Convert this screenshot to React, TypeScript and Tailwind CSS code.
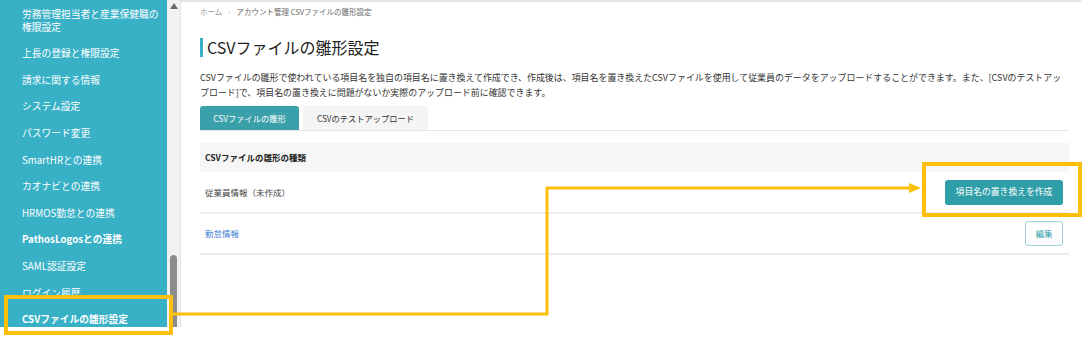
import React from "react";

const menu = [
  { label: "上長の登録と権限設定" },
  { label: "請求に関する情報" },
  { label: "システム設定" },
  { label: "パスワード変更" },
  { label: "SmartHRとの連携" },
  { label: "カオナビとの連携" },
  { label: "HRMOS勤怠との連携" },
  { label: "PathosLogosとの連携", bold: true },
  { label: "SAML認証設定" },
  { label: "ログイン履歴" },
  { label: "CSVファイルの雛形設定", bold: true },
];

export default function App() {
  return (
    <div className="relative w-[1089px] h-[342px] bg-white overflow-hidden font-['Noto_Sans_CJK_JP','Noto_Sans',sans-serif] text-[#333]">
      <div className="flex h-[327px]">
        {/* Sidebar */}
        <aside className="w-[167px] shrink-0 bg-[#38b0c6] text-white text-[9.75px] leading-[13px] pl-[22px] pt-[2px] overflow-hidden">
          <div className="h-[38.5px] flex flex-col justify-center">
            <span>労務管理担当者と産業保健職の</span>
            <span>権限設定</span>
          </div>
          {menu.map((m) => (
            <div
              key={m.label}
              className={`h-[26.6px] flex items-center whitespace-nowrap ${m.bold ? "font-bold" : ""}`}
            >
              {m.label}
            </div>
          ))}
        </aside>

        {/* Scrollbar */}
        <div className="w-[13px] shrink-0 bg-[#f1f1f1] flex flex-col items-center">
          <svg width="8" height="6" viewBox="0 0 8 6" className="mt-[3px]">
            <polygon points="4,0 8,6 0,6" fill="#6b6b6b" />
          </svg>
          <div className="flex-1" />
          <div className="w-[7px] h-[72px] bg-[#8c8c8c] rounded-t-full" />
        </div>

        {/* Main */}
        <main className="w-[901px] shrink-0 border-l border-t-2 border-[#e4e4e4] pl-[19px] pr-[12px]">
          <div className="pt-[4px] text-[7.5px] leading-[12px] text-[#999] flex items-center gap-[6px]">
            <span>ホーム</span>
            <span className="text-[#aaa]">›</span>
            <span className="text-[#666]">アカウント管理 CSVファイルの雛形設定</span>
          </div>

          <h1 className="mt-[20px] border-l-[3px] border-[#38b0c6] pl-[4px] text-[16px] leading-[19px] text-[#222]">
            CSVファイルの雛形設定
          </h1>

          <p className="mt-[13px] text-[8.95px] leading-[15px] text-[#333] whitespace-nowrap">
            CSVファイルの雛形で使われている項目名を独自の項目名に置き換えて作成でき、作成後は、項目名を置き換えたCSVファイルを使用して従業員のデータをアップロードすることができます。また、[CSVのテストアッ
            <br />
            プロード]で、項目名の置き換えに問題がないか実際のアップロード前に確認できます。
          </p>

          {/* Tabs */}
          <div className="mt-[6px] flex gap-[4px] border-b border-[#e6e6e6] text-[8.25px]">
            <div className="w-[99px] h-[24px] flex items-center justify-center bg-[#3aa0aa] text-white rounded-t-[3px]">
              CSVファイルの雛形
            </div>
            <div className="w-[125px] h-[24px] flex items-center justify-center bg-[#f5f5f5] text-[#333] rounded-t-[3px]">
              CSVのテストアップロード
            </div>
          </div>

          {/* Table */}
          <div className="mt-[12px] text-[8.5px]">
            <div className="h-[29px] bg-[#f6f6f6] flex items-center px-[5px] font-bold text-[#222]">
              CSVファイルの雛形の種類
            </div>
            <div className="h-[42px] flex items-center justify-between pl-[5px] pr-[6px] border-b-2 border-[#ececec]">
              <span className="text-[#444]">従業員情報（未作成）</span>
              <button className="w-[118px] h-[25px] bg-[#2f9ea8] text-white rounded-[3px] text-[8.8px] flex items-center justify-center">
                項目名の置き換えを作成
              </button>
            </div>
            <div className="h-[41px] flex items-center justify-between pl-[5px] pr-[6px] border-b-2 border-[#ececec]">
              <span className="text-[#3b7fd4]">勤怠情報</span>
              <button className="w-[38px] h-[25px] bg-white border border-[#9fd3d8] text-[#2f9ea8] rounded-[3px] text-[8.5px] flex items-center justify-center">
                編集
              </button>
            </div>
          </div>
        </main>
      </div>

      {/* Annotation overlay */}
      <svg className="absolute inset-0 pointer-events-none" width="1089" height="342">
        <rect x="6" y="297" width="165" height="36" fill="none" stroke="#fcbf0a" strokeWidth="4" />
        <rect x="924" y="164" width="156" height="51" fill="none" stroke="#fcbf0a" strokeWidth="4" />
        <polyline points="173,314 547,314 547,188 912,188" fill="none" stroke="#fcbf0a" strokeWidth="3" />
        <polygon points="909,183 921,188 909,193" fill="#fcbf0a" />
      </svg>
    </div>
  );
}
